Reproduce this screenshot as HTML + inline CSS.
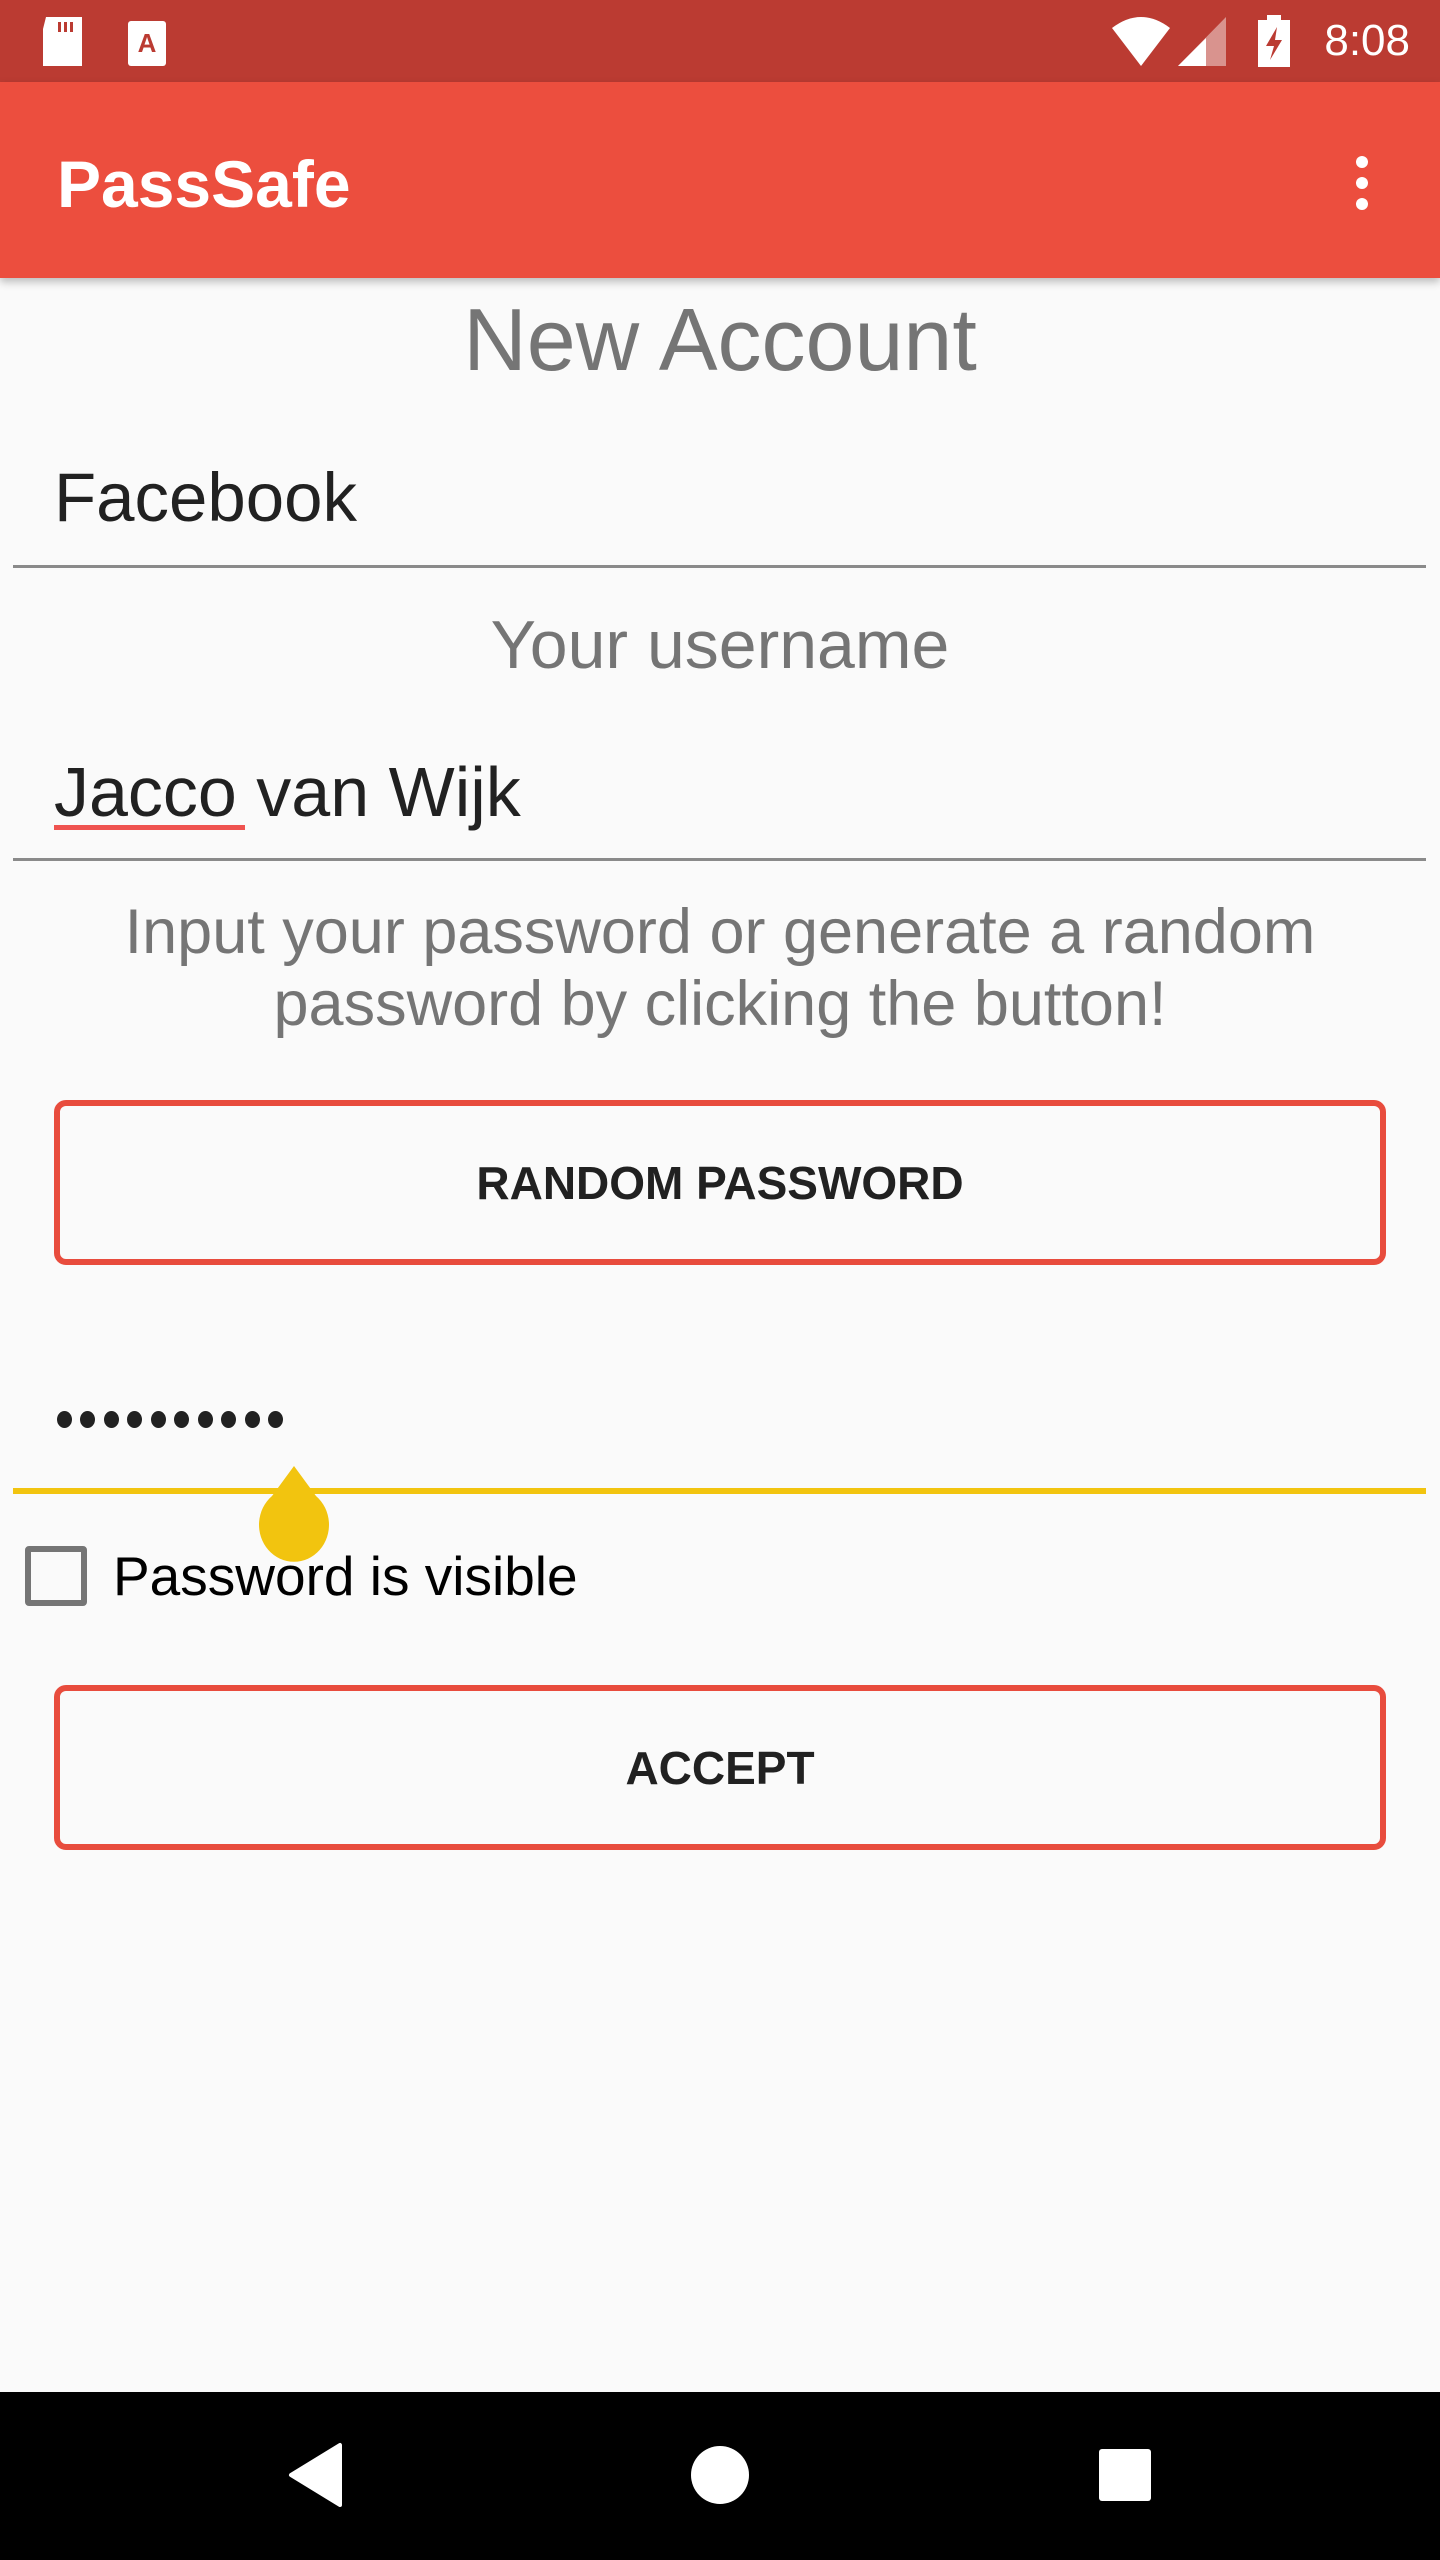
<!DOCTYPE html>
<html><head><meta charset="utf-8"><style>
*{margin:0;padding:0;box-sizing:border-box}
body{width:1440px;height:2560px;background:#fafafa;font-family:"Liberation Sans",sans-serif;position:relative;overflow:hidden}
.a{position:absolute}
.c{position:absolute;left:0;width:1440px;text-align:center;color:#757575}
.btn{position:absolute;left:54px;width:1332px;height:165px;border:6px solid #e84c3d;border-radius:12px;display:flex;align-items:center;justify-content:center;font-size:46px;font-weight:bold;color:#212121}
.d{position:absolute;top:1411px;width:15px;height:17px;border-radius:50%;background:#212121}
</style></head><body>
<div class="a" style="left:0;top:0;width:1440px;height:82px;background:#bb3b32"></div>
<svg class="a" style="left:0;top:0" width="1440" height="82">
<path d="M46 17 H82 V66 H43 V29 Z" fill="#fff"/><rect x="58" y="22" width="3" height="10" fill="#bb3b32"/><rect x="64" y="22" width="3" height="10" fill="#bb3b32"/><rect x="70" y="22" width="3" height="10" fill="#bb3b32"/>
<rect x="128" y="21" width="38" height="45" rx="3" fill="#fff"/><text x="147" y="52" font-size="26" font-weight="bold" fill="#bb3b32" text-anchor="middle" font-family="Liberation Sans">A</text>
<path d="M1112 28 Q1141 6 1170 28 L1141 66 Z" fill="#fff"/>
<path d="M1178 66 L1226 17 V66 Z" fill="#fff" opacity="0.45"/><path d="M1178 66 L1206 38 V66 Z" fill="#fff"/>
<rect x="1258" y="20" width="32" height="47" fill="#fff"/><rect x="1267" y="15" width="14" height="6" fill="#fff"/><path d="M1277 27 L1266 46 H1274 L1270 60 L1282 40 H1275 Z" fill="#bb3b32"/>
<text x="1410" y="55" font-size="44" fill="#fff" text-anchor="end" font-family="Liberation Sans">8:08</text>
</svg>
<div class="a" style="left:0;top:82px;width:1440px;height:196px;background:#ec4e3e;box-shadow:0 4px 8px rgba(0,0,0,.25)"></div>
<div class="a" style="left:57px;top:151px;font-size:66px;color:#fff;font-weight:bold;line-height:1">PassSafe</div>
<div class="a" style="left:1356px;top:156px;width:12px;height:12px;border-radius:6px;background:#fff"></div>
<div class="a" style="left:1356px;top:177px;width:12px;height:12px;border-radius:6px;background:#fff"></div>
<div class="a" style="left:1356px;top:198px;width:12px;height:12px;border-radius:6px;background:#fff"></div>

<div class="c" style="top:290px;font-size:88px;line-height:100px">New Account</div>
<div class="a" style="left:54px;top:458px;font-size:69px;color:#212121;line-height:80px">Facebook</div>
<div class="a" style="left:13px;top:565px;width:1413px;height:3px;background:#8a8a8a"></div>
<div class="c" style="top:605px;font-size:68px;line-height:80px">Your username</div>
<div class="a" style="left:54px;top:752px;font-size:70px;color:#212121;line-height:80px">Jacco van Wijk</div>
<div class="a" style="left:54px;top:825px;width:191px;height:5px;background:#ef5350"></div>
<div class="a" style="left:13px;top:858px;width:1413px;height:3px;background:#8a8a8a"></div>
<div class="c" style="top:896px;font-size:63px;line-height:72px">Input your password or generate a random<br>password by clicking the button!</div>
<div class="btn" style="top:1100px">RANDOM PASSWORD</div>
<div class="d" style="left:57px"></div><div class="d" style="left:80px"></div><div class="d" style="left:104px"></div><div class="d" style="left:127px"></div><div class="d" style="left:151px"></div><div class="d" style="left:174px"></div><div class="d" style="left:198px"></div><div class="d" style="left:221px"></div><div class="d" style="left:245px"></div><div class="d" style="left:268px"></div>
<div class="a" style="left:13px;top:1488px;width:1413px;height:6px;background:#f2c40f"></div>
<svg class="a" style="left:258px;top:1464px" width="72" height="100"><path d="M36 2 L58 32 A35 37 0 1 1 14 32 Z" fill="#f2c40f"/></svg>
<div class="a" style="left:25px;top:1546px;width:62px;height:60px;border:6px solid #757575;border-radius:4px"></div>
<div class="a" style="left:113px;top:1536px;font-size:55px;color:#000;line-height:80px">Password is visible</div>
<div class="btn" style="top:1685px">ACCEPT</div>

<div class="a" style="left:0;top:2392px;width:1440px;height:168px;background:#000"></div>
<svg class="a" style="left:0;top:2392px" width="1440" height="168">
<path d="M340 53 V113 L291 83 Z" fill="#fff" stroke="#fff" stroke-width="4" stroke-linejoin="round"/>
<circle cx="720" cy="83" r="29" fill="#fff"/>
<rect x="1099" y="57" width="52" height="52" rx="3" fill="#fff"/>
</svg>
</body></html>
